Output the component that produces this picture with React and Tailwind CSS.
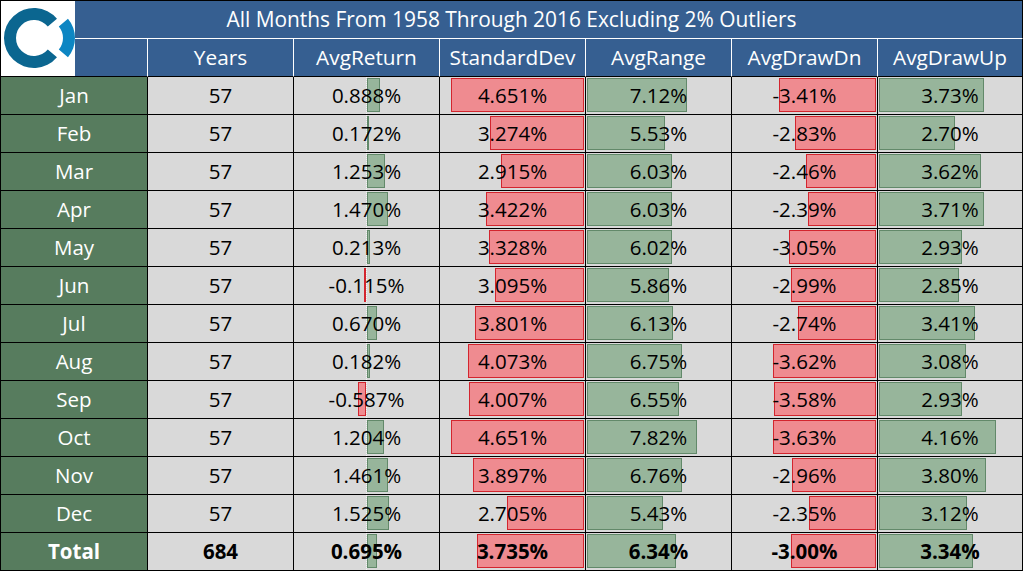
import React from "react";

const rows = [
    ["Jan", "57", 0.888, 4.651, 7.12, -3.41, 3.73],
    ["Feb", "57", 0.172, 3.274, 5.53, -2.83, 2.7],
    ["Mar", "57", 1.253, 2.915, 6.03, -2.46, 3.62],
    ["Apr", "57", 1.47, 3.422, 6.03, -2.39, 3.71],
    ["May", "57", 0.213, 3.328, 6.02, -3.05, 2.93],
    ["Jun", "57", -0.115, 3.095, 5.86, -2.99, 2.85],
    ["Jul", "57", 0.67, 3.801, 6.13, -2.74, 3.41],
    ["Aug", "57", 0.182, 4.073, 6.75, -3.62, 3.08],
    ["Sep", "57", -0.587, 4.007, 6.55, -3.58, 2.93],
    ["Oct", "57", 1.204, 4.651, 7.82, -3.63, 4.16],
    ["Nov", "57", 1.461, 3.897, 6.76, -2.96, 3.8],
    ["Dec", "57", 1.525, 2.705, 5.43, -2.35, 3.12],
    ["Total", "684", 0.695, 3.735, 6.34, -3.0, 3.34],
];

const headers = ["Years", "AvgReturn", "StandardDev", "AvgRange", "AvgDrawDn", "AvgDrawUp"];

const red = "bg-[#ef8b90] border border-[#d3252e]";
const green = "bg-[#97b59b] border border-[#62896a]";

// px per percent point, measured off the sheet
const Bar = ({ kind, v }) => {
    if (kind === "ret") {
        const w = Math.max(1.5, Math.abs(v) * 14.2);
        return (
            <div className="[grid-area:1/1] grid grid-cols-[72px_1fr]">
                <div className="flex justify-end pt-[1px] pb-[2px]">
                    {v < 0 && <div className={red} style={{ width: w }} />}
                </div>
                <div className="flex justify-start pt-[1px] pb-[2px] border-l border-dotted border-[#f4f4f4]">
                    {v >= 0 && <div className={green} style={{ width: w }} />}
                </div>
            </div>
        );
    }
    const side = kind === "sd" || kind === "dn" ? "justify-self-end mr-[1px]" : "justify-self-start ml-[1px]";
    const color = kind === "sd" || kind === "dn" ? red : green;
    const k = { sd: 28.6, range: 14.07, dn: 28.5, up: 28.2 }[kind];
    return <div className={`[grid-area:1/1] self-stretch mt-[1px] mb-[2px] ${side} ${color}`} style={{ width: Math.abs(v) * k }} />;
};

const Logo = () => (
    <div className="absolute top-0 left-0 w-[74px] h-[75px] bg-white">
        <svg width="74" height="75" viewBox="0 0 74 75">
            <path
                d="M 55.98 17.72 A 30 30 0 1 0 55.98 56.28 L 46.79 48.57 A 18 18 0 1 1 46.79 25.43 Z"
                fill="#0b6690"
            />
            <path
                d="M 66.98 17.72 A 30 30 0 0 1 66.98 56.28 L 57.79 48.57 A 18 18 0 0 0 57.79 25.43 Z"
                fill="#0d86c3"
            />
        </svg>
    </div>
);

const fmt3 = (v) => v.toFixed(3) + "%";
const fmt2 = (v) => v.toFixed(2) + "%";

export default function App() {
    return (
        <div className="bg-white w-[1024px] h-[572px]" style={{ fontFamily: "'Open Sans', sans-serif" }}>
            <div className="relative w-[1023px] border-l border-t border-black grid grid-cols-[147px_146px_146px_146px_146px_146px_145px] text-[20.5px] leading-none">
                <div className="col-span-7 h-[38px] bg-[#365f91] border-b border-r border-b-white border-r-black flex items-center justify-center text-white text-[20.9px]">
                    All Months From 1958 Through 2016 Excluding 2% Outliers
                </div>

                <div className="h-[38px] bg-[#365f91] border-r border-b border-r-white border-b-black" />
                {headers.map((h, i) => (
                    <div
                        key={h}
                        className={`h-[38px] bg-[#365f91] border-r border-b border-b-black flex items-center justify-center text-white text-[20.8px] ${i === 5 ? "border-r-black" : "border-r-white"}`}
                    >
                        {h}
                    </div>
                ))}

                {rows.map((r) => {
                    const total = r[0] === "Total";
                    const cell = `h-[38px] bg-[#d9d9d9] border-r border-b border-black grid text-black ${total ? "font-bold" : ""}`;
                    const txt = "[grid-area:1/1] self-center justify-self-center relative";
                    return (
                        <React.Fragment key={r[0]}>
                            <div className={`h-[38px] bg-[#577c5e] border-r border-b border-black flex items-center justify-center text-white ${total ? "font-bold" : ""}`}>
                                {r[0]}
                            </div>
                            <div className={cell}>
                                <span className={txt}>{r[1]}</span>
                            </div>
                            <div className={cell}>
                                <Bar kind="ret" v={r[2]} />
                                <span className={txt}>{fmt3(r[2])}</span>
                            </div>
                            <div className={cell}>
                                <Bar kind="sd" v={r[3]} />
                                <span className={txt}>{fmt3(r[3])}</span>
                            </div>
                            <div className={cell}>
                                <Bar kind="range" v={r[4]} />
                                <span className={txt}>{fmt2(r[4])}</span>
                            </div>
                            <div className={cell}>
                                <Bar kind="dn" v={r[5]} />
                                <span className={txt}>{fmt2(r[5])}</span>
                            </div>
                            <div className={cell}>
                                <Bar kind="up" v={r[6]} />
                                <span className={txt}>{fmt2(r[6])}</span>
                            </div>
                        </React.Fragment>
                    );
                })}

                <Logo />
            </div>
        </div>
    );
}
